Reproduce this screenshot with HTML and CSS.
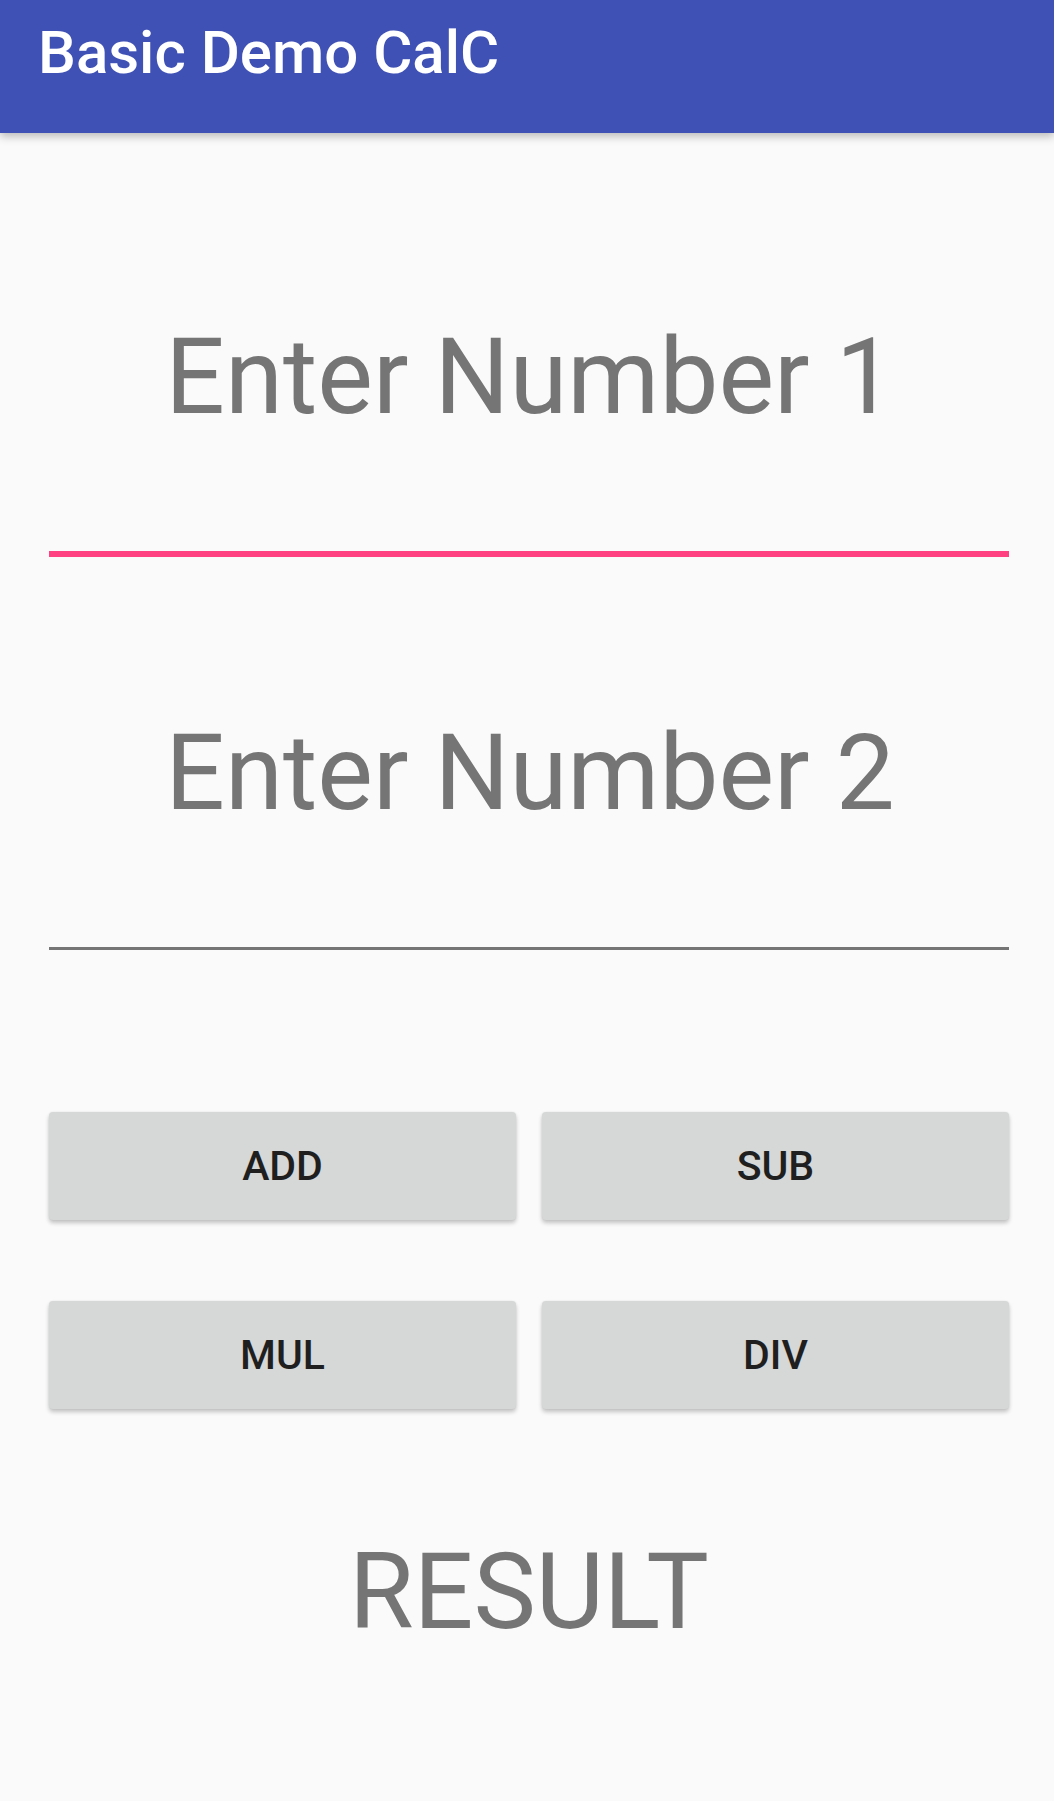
FILE: index.html
```html
<!DOCTYPE html>
<html>
<head>
<meta charset="utf-8">
<title>Basic Demo CalC</title>
<link rel="stylesheet" href="styles.css">
</head>
<body>
<header class="appbar">
  <h1 class="appbar-title">Basic Demo CalC</h1>
</header>
<main class="content">
  <div class="field field-focused">
    <span class="hint">Enter Number 1</span>
  </div>
  <div class="field field-second">
    <span class="hint">Enter Number 2</span>
  </div>
  <div class="button-grid">
    <button class="btn">ADD</button>
    <button class="btn">SUB</button>
    <button class="btn">MUL</button>
    <button class="btn">DIV</button>
  </div>
  <div class="result">RESULT</div>
</main>
</body>
</html>
```
FILE: styles.css
```css
html, body {
  margin: 0;
  padding: 0;
}
body {
  background: #fafafa;
  font-family: Roboto, "Liberation Sans", sans-serif;
  width: 1054px;
  height: 1801px;
  overflow: hidden;
}
.appbar {
  height: 133px;
  background: #3f51b5;
  box-shadow: 0 3px 9px rgba(0, 0, 0, 0.28);
  box-sizing: border-box;
  padding: 23px 0 0 38px;
  position: relative;
}
.appbar-title {
  margin: 0;
  color: #ffffff;
  font-size: 60px;
  font-weight: 500;
  line-height: 60px;
}
.content {
  padding: 0 45px 0 49px;
}
.field {
  text-align: center;
  padding-bottom: 121px;
}
.field-focused {
  margin-top: 192px;
  border-bottom: 6px solid #ff4081;
}
.field-second {
  margin-top: 164px;
  border-bottom: 3px solid #757575;
}
.hint {
  display: block;
  color: #757575;
  font-size: 105px;
  line-height: 105px;
  margin-left: 2px;
}
.button-grid {
  margin-top: 162px;
  display: grid;
  grid-template-columns: 1fr 1fr;
  column-gap: 26px;
  row-gap: 81px;
}
.btn {
  height: 108px;
  border: none;
  border-radius: 4px;
  background: #d6d7d7;
  box-shadow: 0 3px 4px rgba(0, 0, 0, 0.22), 0 0 2px rgba(0, 0, 0, 0.08);
  color: #1f1f1f;
  font-family: Roboto, "Liberation Sans", sans-serif;
  font-size: 41px;
  font-weight: 500;
  line-height: 41px;
  padding: 0;
}
.result {
  margin-top: 131px;
  text-align: center;
  color: #757575;
  font-size: 105px;
  line-height: 105px;
}
```
